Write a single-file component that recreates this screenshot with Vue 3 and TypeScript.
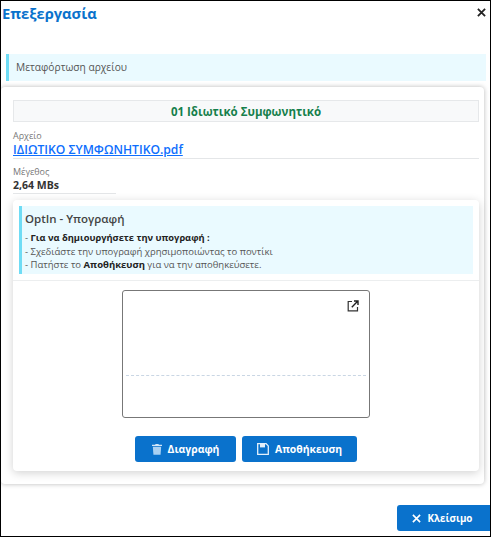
<script setup lang="ts">
const steps = [
  'Σχεδιάστε την υπογραφή χρησιμοποιώντας το ποντίκι',
]
</script>

<template>
  <div class="window">
    <header class="modal-header">
      <h1 class="modal-title">Επεξεργασία</h1>
      <svg class="close-x" viewBox="0 0 10 10" width="9" height="9">
        <path d="M1 1l8 8M9 1l-8 8" stroke="#222" stroke-width="2" fill="none" />
      </svg>
    </header>

    <div class="upload-alert">Μεταφόρτωση αρχείου</div>

    <section class="panel">
      <div class="doc-title">01 Ιδιωτικό Συμφωνητικό</div>

      <div class="field">
        <div class="field-label">Αρχείο</div>
        <a class="field-link" href="#">ΙΔΙΩΤΙΚΟ ΣΥΜΦΩΝΗΤΙΚΟ.pdf</a>
      </div>

      <div class="field field-short">
        <div class="field-label">Μέγεθος</div>
        <div class="field-value">2,64 MBs</div>
      </div>

      <div class="sign-card">
        <div class="sign-info">
          <h2 class="sign-title">OptIn - Υπογραφή</h2>
          <p>- <b class="sign-lead">Για να δημιουργήσετε την υπογραφή :</b></p>
          <p v-for="step in steps" :key="step">- {{ step }}</p>
          <p>- Πατήστε το <b>Αποθήκευση</b> για να την αποθηκεύσετε.</p>
        </div>

        <div class="sign-body">
          <div class="sign-pad">
            <svg class="expand" viewBox="0 0 12 12" width="12" height="12">
              <path d="M5 1.5H1.2v9.3h9.3V7" stroke="#333" stroke-width="1.2" fill="none" />
              <path d="M4.8 7.2L10.4 1.6M7 1h4v4" stroke="#222" stroke-width="1.4" fill="none" />
            </svg>
            <div class="sign-line"></div>
          </div>

          <div class="sign-actions">
            <button type="button" class="btn btn-delete">
              <svg viewBox="0 0 12 14" width="10" height="12">
                <path d="M4 1h4v1h4v1.4H0V2h4z" fill="#cfe5f8" />
                <path d="M1 4.4h10l-.7 9.6H1.7z" fill="#a9d0f2" />
              </svg>
              Διαγραφή
            </button>
            <button type="button" class="btn btn-save">
              <svg viewBox="0 0 12 12" width="12" height="12">
                <path d="M.7.7h8.4l2.2 2.2v8.4H.7z" fill="none" stroke="#e3f0fb" stroke-width="1.3" />
                <path d="M3 1h5v3.4H3z" fill="#e3f0fb" />
              </svg>
              Αποθήκευση
            </button>
          </div>
        </div>
      </div>
    </section>

    <footer class="modal-footer">
      <button type="button" class="btn btn-close">
        <svg viewBox="0 0 10 10" width="9" height="9">
          <path d="M1 1l8 8M9 1l-8 8" stroke="#fff" stroke-width="1.8" fill="none" />
        </svg>
        Κλείσιμο
      </button>
    </footer>
  </div>
</template>

<style>
html,
body {
  margin: 0;
  background: #fff;
}
</style>

<style scoped>
.window {
  box-sizing: border-box;
  width: 491px;
  height: 537px;
  border: 1px solid #000;
  overflow: hidden;
  font-family: "Open Sans", "Noto Sans", sans-serif;
  font-size: 10px;
  color: #555;
  background: #fff;
}

.modal-header {
  display: flex;
  align-items: center;
  justify-content: space-between;
  height: 26px;
  padding: 0 4px 0 1px;
}

.modal-title {
  margin: 0 0 2px;
  font-size: 14.7px;
  font-weight: 700;
  color: #0a72cc;
}

.close-x {
  margin-bottom: 4px;
}

.upload-alert {
  margin: 27px 4px 0 5px;
  height: 27px;
  line-height: 27px;
  padding-left: 7px;
  border-left: 3px solid #6fdcf5;
  background: #eafaff;
  font-size: 10.2px;
  color: #555;
}

.panel {
  margin-top: 6px;
  width: 483px;
  height: 397px;
  box-sizing: border-box;
  padding: 13px 5px 0 12px;
  background: #fff;
  border-radius: 4px;
  box-shadow: 0 0 5px rgba(0, 0, 0, 0.28);
}

.doc-title {
  height: 22px;
  line-height: 22px;
  text-align: center;
  font-size: 11.5px;
  font-weight: 700;
  color: #157f4b;
  background: #f8f9fa;
  border: 1px solid #e6e8ea;
  box-sizing: border-box;
}

.field {
  margin-top: 7px;
  border-bottom: 1px solid #e4e6e8;
  height: 29px;
}

.field + .field {
  margin-top: 6px;
}

.field-short {
  width: 103px;
  height: 28px;
}

.field-label {
  font-size: 9px;
  line-height: 13px;
  color: #777;
}

.field-link {
  display: block;
  font-size: 12.15px;
  line-height: 16px;
  font-weight: 600;
  color: #0d6efd;
}

.field-value {
  font-size: 10.5px;
  line-height: 15px;
  font-weight: 700;
  color: #333;
}

.sign-card {
  margin-top: 6px;
  height: 271px;
  border-radius: 4px;
  box-shadow: 0 2px 10px rgba(0, 0, 0, 0.18);
  background: #fff;
  padding-top: 6px;
  box-sizing: border-box;
}

.sign-info {
  margin: 0 6px;
  height: 68px;
  box-sizing: border-box;
  padding: 4px 3px 0;
  border-left: 3px solid #6fdcf5;
  background: #eafaff;
}

.sign-title {
  margin: 0 0 4px;
  font-size: 11.5px;
  line-height: 17px;
  font-weight: 600;
  color: #444;
}

.sign-info p {
  margin: 0;
  font-size: 9.5px;
  line-height: 13.5px;
}

.sign-info b {
  color: #222;
}

.sign-info .sign-lead {
  font-size: 9.3px;
}

.sign-body {
  margin-top: 6px;
  padding-top: 9px;
  border-top: 1px solid #eceeef;
  display: flex;
  flex-direction: column;
  align-items: center;
}

.sign-pad {
  position: relative;
  box-sizing: border-box;
  width: 248px;
  height: 128px;
  border: 1px solid #777;
  border-radius: 3px;
  background: #fff;
}

.expand {
  position: absolute;
  top: 9px;
  right: 10px;
}

.sign-line {
  position: absolute;
  left: 3px;
  right: 3px;
  top: 84px;
  border-top: 1px dashed #c9d6e4;
}

.sign-actions {
  display: flex;
  gap: 6px;
  margin-top: 18px;
}

.btn {
  display: inline-flex;
  align-items: center;
  justify-content: center;
  box-sizing: border-box;
  height: 26px;
  border: 0;
  border-radius: 3px;
  background: #0a72cc;
  color: #fff;
  font-family: inherit;
  font-size: 10.4px;
  font-weight: 700;
  gap: 6px;
}

.btn-delete {
  width: 101px;
}

.btn-save {
  width: 115px;
}

.modal-footer {
  display: flex;
  justify-content: flex-end;
  margin-top: 21px;
}

.btn-close {
  width: 93px;
  border-radius: 3px 0 0 3px;
  gap: 7px;
  font-size: 9.8px;
  padding-left: 3px;
}
</style>
